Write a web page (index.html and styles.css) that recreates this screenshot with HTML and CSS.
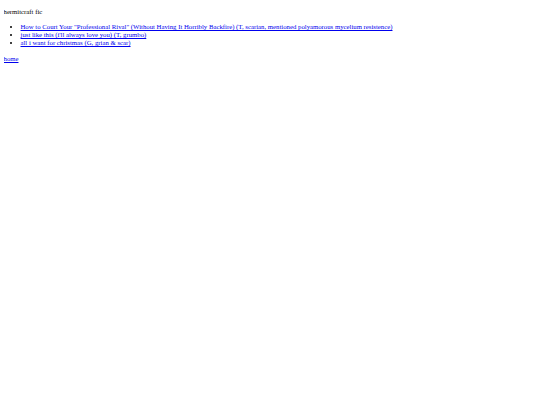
FILE: index.html
```html
<!DOCTYPE html>
<html>
<head>
<meta charset="utf-8">
<link rel="stylesheet" href="styles.css">
</head>
<body class="page">
<p class="title">hermitcraft fic</p>
<ul class="fics">
<li><a href="#">How to Court Your "Professional Rival" (Without Having It Horribly Backfire) (T, scarian, mentioned polyamorous mycelium resistence)</a></li>
<li><a href="#">just like this (i'll always love you) (T, grumbo)</a></li>
<li><a href="#">all i want for christmas (G, grian &amp; scar)</a></li>
</ul>
<p class="nav"><a href="#">home</a></p>
</body>
</html>
```
FILE: styles.css
```css
html { background: #fff; }
.page {
  margin: 0 3.5px;
  padding-top: 0.1px;
  font-family: "Liberation Serif", "Times New Roman", serif;
  font-size: 6.75px;
  line-height: 8px;
  color: #000;
}
.title { margin: 7.5px 0 7.5px; }
.fics { margin: 7.5px 0 7.5px; padding-left: 17px; }
.nav { margin: 7.5px 0; }
a { color: #0000ee; }
```
